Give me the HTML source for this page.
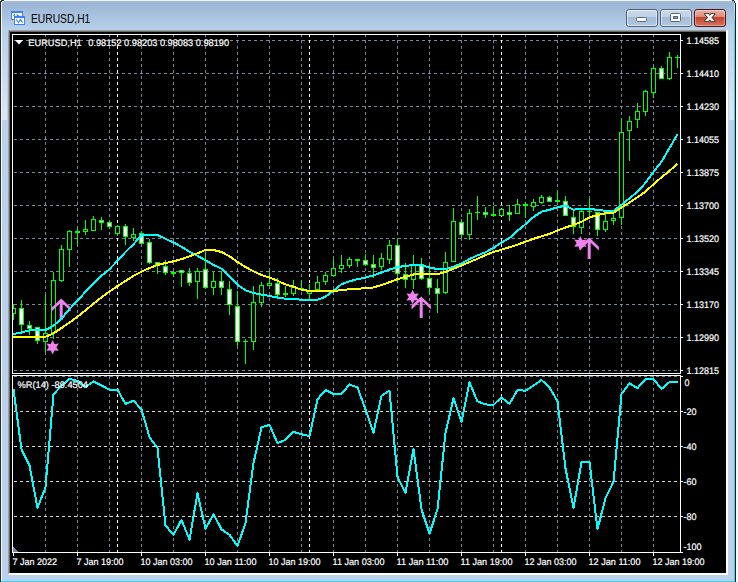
<!DOCTYPE html>
<html><head><meta charset="utf-8"><title>EURUSD,H1</title>
<style>
html,body{margin:0;padding:0;background:#fff;}
body{width:738px;height:582px;overflow:hidden;position:relative;font-family:"Liberation Sans",sans-serif;}
#win{position:absolute;left:0;top:0;width:736px;height:583px;background:#b9d1ea;}
#tb{position:absolute;left:0;top:0;width:736px;height:31px;background:linear-gradient(#a3bddb 0px,#9bb6d5 4px,#b9d1ea 30px);}
.edge{position:absolute;}
#ttl{position:absolute;left:30.8px;top:11px;font-size:12px;line-height:16px;color:#000;white-space:nowrap;transform-origin:0 0;transform:scaleX(0.855);}
.btn{position:absolute;top:9px;width:29px;height:16px;border:1px solid #56657c;border-radius:3px;background:linear-gradient(#c9d9ec 0,#bdd0e6 48%,#a4bcd9 52%,#b4c9e2 100%);box-shadow:inset 0 0 0 1px rgba(255,255,255,.55);}
#bc{border-color:#4a1a1a;background:linear-gradient(#e9a99b 0,#dc8673 48%,#c6452a 52%,#d0694f 100%);box-shadow:inset 0 0 0 1px rgba(255,255,255,.35);}
</style></head><body>
<div id="win"></div>
<div id="tb"></div>
<div class="edge" style="left:0;top:0;width:736px;height:1px;background:#f4f8fc"></div>
<div class="edge" style="left:0;top:0;width:1px;height:582px;background:#2b2b2b"></div>
<div class="edge" style="left:1px;top:1px;width:1px;height:581px;background:#f4f8fc"></div>
<div class="edge" style="left:734px;top:1px;width:1px;height:581px;background:linear-gradient(#b4ecfa 0,#b4ecfa 8px,#4fd6f3 22px,#35d3ee 40px,#35d3ee 100%)"></div>
<div class="edge" style="left:735px;top:1px;width:1px;height:581px;background:#1d1d1d"></div>
<div class="edge" style="left:1px;top:581px;width:734px;height:1px;background:#35d3ee"></div>
<div class="edge" style="left:2px;top:31px;width:5px;height:89px;background:linear-gradient(#b9d1ea,#dbe7f5)"></div>
<div class="edge" style="left:729px;top:31px;width:5px;height:89px;background:linear-gradient(#b9d1ea,#dbe7f5)"></div>
<div class="edge" style="left:0;top:0;width:1px;height:1px;background:#fff"></div>
<div class="edge" style="left:1px;top:0;width:3px;height:1px;background:#222"></div>
<div class="edge" style="left:1px;top:1px;width:1px;height:1px;background:#444"></div>
<div class="edge" style="left:2px;top:1px;width:2px;height:1px;background:#e8eef6"></div>
<div class="edge" style="left:732px;top:0;width:2px;height:1px;background:#123"></div>
<div class="edge" style="left:734px;top:0;width:4px;height:1px;background:#fff"></div>
<div class="edge" style="left:734px;top:1px;width:1px;height:2px;background:#123"></div>
<div class="edge" style="left:735px;top:1px;width:1px;height:2px;background:#fff"></div>
<div class="edge" style="left:8px;top:30px;width:720px;height:545px;background:#fff"></div>
<div class="edge" style="left:8px;top:30px;width:719px;height:544px;background:#a0a0a0"></div>
<div class="edge" style="left:9px;top:31px;width:718px;height:543px;background:#e3e3e3"></div>
<div class="edge" style="left:9px;top:31px;width:717px;height:542px;background:#696969"></div>
<div class="edge" style="left:726px;top:30px;width:2px;height:545px;background:#fff"></div>
<div class="edge" style="left:8px;top:573px;width:720px;height:2px;background:#fff"></div>
<div class="edge" style="left:8px;top:30px;width:1px;height:544px;background:#a0a0a0"></div>
<div class="edge" style="left:9px;top:31px;width:1px;height:542px;background:#696969"></div>
<!-- icon -->
<svg class="edge" style="left:10px;top:10px" width="16" height="16" viewBox="0 0 16 16" shape-rendering="crispEdges">
<rect x="1" y="1" width="12" height="9" fill="#3f80fb"/><rect x="2" y="3" width="10" height="6" fill="#fff"/>
<rect x="4" y="6" width="11" height="9" fill="#3f80fb"/><rect x="5" y="8" width="9" height="6" fill="#fffef0"/>
<g shape-rendering="geometricPrecision" fill="none" stroke="#3f80fb" stroke-width="1.1">
<path d="M3.2 5.6L4.6 4.4L4.6 5.8M6.6 4.3L8 5.9L9.4 5.9"/>
<path d="M6.2 9.3L8.5 12.7L10.4 9.4L12.6 12.6"/>
</g>
</svg>
<div id="ttl">EURUSD,H1</div>
<svg class="edge" style="left:620px;top:4px" width="112" height="28" viewBox="620 4 112 28">
<defs>
<linearGradient id="gb" x1="0" y1="0" x2="0" y2="1"><stop offset="0" stop-color="#c9d9ec"/><stop offset="0.44" stop-color="#bfd1e7"/><stop offset="0.45" stop-color="#a2bbd8"/><stop offset="1" stop-color="#b3c9e3"/></linearGradient>
<linearGradient id="gr" x1="0" y1="0" x2="0" y2="1"><stop offset="0" stop-color="#ecb5a8"/><stop offset="0.44" stop-color="#de8a76"/><stop offset="0.45" stop-color="#c4432a"/><stop offset="1" stop-color="#d9775c"/></linearGradient>
</defs>
<rect x="626.5" y="9.5" width="31" height="17" rx="2.5" fill="url(#gb)" stroke="#55637a"/>
<rect x="627.5" y="10.5" width="29" height="15" rx="2" fill="none" stroke="#fff" stroke-opacity=".5"/>
<rect x="660.5" y="9.5" width="31" height="17" rx="2.5" fill="url(#gb)" stroke="#55637a"/>
<rect x="661.5" y="10.5" width="29" height="15" rx="2" fill="none" stroke="#fff" stroke-opacity=".5"/>
<rect x="694.5" y="9.5" width="31" height="17" rx="2.5" fill="url(#gr)" stroke="#4b1622"/>
<rect x="695.5" y="10.5" width="29" height="15" rx="2" fill="none" stroke="#fff" stroke-opacity=".35"/>
<rect x="636.5" y="17.5" width="10" height="4" rx="1" fill="#fbfbfb" stroke="#5c6677"/>
<rect x="670.5" y="13.5" width="10" height="8" rx="1" fill="#fbfbfb" stroke="#5c6677"/>
<rect x="673.5" y="16.5" width="4" height="2" fill="#7f97b8" stroke="#5c6677"/>
<path d="M705 14h3.2l6.3 7h-3.2zM711.3 14h3.2l-6.3 7h-3.2z" fill="#53434a" stroke="#53434a" stroke-width="2" stroke-linejoin="round"/>
<path d="M705 14h3.2l6.3 7h-3.2zM711.3 14h3.2l-6.3 7h-3.2z" fill="#fafafa"/>
</svg>
<svg width="738" height="582" viewBox="0 0 738 582" style="position:absolute;left:0;top:0" shape-rendering="crispEdges">
<defs><clipPath id="cm"><rect x="13" y="35" width="667" height="338"/></clipPath><clipPath id="cs"><rect x="13" y="376" width="667" height="176"/></clipPath></defs>
<rect x="10" y="32" width="716" height="541" fill="#000"/>
<path d="M14 40.5H680 M14 73.5H680 M14 106.5H680 M14 139.5H680 M14 172.5H680 M14 205.5H680 M14 238.5H680 M14 271.5H680 M14 304.5H680 M14 337.5H680 M14 370.5H680 M45.5 34V373 M77.5 34V373 M109.5 34V373 M141.5 34V373 M173.5 34V373 M205.5 34V373 M237.5 34V373 M269.5 34V373 M301.5 34V373 M333.5 34V373 M365.5 34V373 M397.5 34V373 M429.5 34V373 M461.5 34V373 M493.5 34V373 M525.5 34V373 M557.5 34V373 M589.5 34V373 M621.5 34V373 M653.5 34V373" stroke="#778899" stroke-width="1" stroke-dasharray="3 3" fill="none"/>
<path d="M117.5 34V373 M117.5 376V552 M309.5 34V373 M309.5 376V552 M501.5 34V373 M501.5 376V552" stroke="#fff" stroke-width="1" stroke-dasharray="3 3" fill="none"/>
<path d="M14 376.5H680 M45.5 376V552 M77.5 376V552 M109.5 376V552 M141.5 376V552 M173.5 376V552 M205.5 376V552 M237.5 376V552 M269.5 376V552 M301.5 376V552 M333.5 376V552 M365.5 376V552 M397.5 376V552 M429.5 376V552 M461.5 376V552 M493.5 376V552 M525.5 376V552 M557.5 376V552 M589.5 376V552 M621.5 376V552 M653.5 376V552" stroke="#778899" stroke-width="1" stroke-dasharray="3 3" fill="none"/>
<path d="M14 411.5H680 M14 446.5H680 M14 481.5H680 M14 516.5H680" stroke="#d8d8d8" stroke-width="1" stroke-dasharray="3 3" fill="none"/>
<g clip-path="url(#cm)">
<path d="M13 304h1V320h-1zM11 308h5V314h-5zM21 300h1V332h-1zM19 308h5V325h-5zM29 321h1V335h-1zM27 325h5V329h-5zM37 327h1V344h-1zM35 327h5V341h-5zM45 295h1V352h-1zM43 333h5V342h-5zM53 272h1V339h-1zM51 280h5V333h-5zM61 245h1V282h-1zM59 249h5V281h-5zM69 230h1V267h-1zM67 231h5V250h-5zM77 228h1V245h-1zM75 231h5V233h-5zM85 220h1V235h-1zM83 229h5V232h-5zM93 216h1V231h-1zM91 219h5V231h-5zM101 217h1V230h-1zM99 220h5V223h-5zM109 221h1V229h-1zM107 222h5V227h-5zM117 225h1V236h-1zM115 226h5V234h-5zM125 224h1V245h-1zM123 226h5V237h-5zM133 228h1V241h-1zM131 234h5V238h-5zM141 231h1V244h-1zM139 233h5V244h-5zM149 239h1V264h-1zM147 242h5V263h-5zM157 262h1V274h-1zM155 262h5V266h-5zM165 260h1V275h-1zM163 266h5V273h-5zM173 271h1V277h-1zM171 272h5V274h-5zM181 270h1V287h-1zM179 270h5V273h-5zM189 268h1V286h-1zM187 273h5V283h-5zM197 268h1V299h-1zM195 271h5V282h-5zM205 253h1V289h-1zM203 269h5V288h-5zM213 272h1V295h-1zM211 281h5V288h-5zM221 271h1V295h-1zM219 281h5V288h-5zM229 281h1V315h-1zM227 289h5V305h-5zM237 291h1V346h-1zM235 306h5V342h-5zM245 339h1V364h-1zM243 341h5V342h-5zM253 286h1V350h-1zM251 302h5V342h-5zM261 282h1V307h-1zM259 285h5V303h-5zM269 271h1V286h-1zM267 283h5V286h-5zM277 278h1V296h-1zM275 283h5V295h-5zM285 286h1V297h-1zM283 293h5V295h-5zM293 280h1V296h-1zM291 287h5V294h-5zM301 280h1V289h-1zM299 288h5V289h-5zM309 284h1V299h-1zM307 291h5V294h-5zM317 276h1V290h-1zM315 282h5V290h-5zM325 272h1V285h-1zM323 275h5V282h-5zM333 259h1V277h-1zM331 268h5V276h-5zM341 255h1V273h-1zM339 265h5V269h-5zM349 257h1V268h-1zM347 259h5V266h-5zM357 259h1V267h-1zM355 259h5V261h-5zM365 254h1V266h-1zM363 260h5V265h-5zM373 255h1V278h-1zM371 264h5V268h-5zM381 253h1V270h-1zM379 258h5V267h-5zM389 240h1V264h-1zM387 245h5V260h-5zM397 239h1V283h-1zM395 245h5V274h-5zM405 263h1V288h-1zM403 274h5V280h-5zM413 255h1V289h-1zM411 264h5V280h-5zM421 258h1V280h-1zM419 264h5V279h-5zM429 264h1V295h-1zM427 278h5V288h-5zM437 279h1V313h-1zM435 288h5V294h-5zM445 252h1V294h-1zM443 262h5V293h-5zM453 208h1V262h-1zM451 221h5V262h-5zM461 219h1V238h-1zM459 222h5V235h-5zM469 209h1V240h-1zM467 213h5V235h-5zM477 196h1V220h-1zM475 212h5V213h-5zM485 207h1V218h-1zM483 212h5V215h-5zM493 206h1V216h-1zM491 214h5V216h-5zM501 209h1V216h-1zM499 209h5V216h-5zM509 205h1V221h-1zM507 212h5V215h-5zM517 199h1V214h-1zM515 204h5V214h-5zM525 202h1V218h-1zM523 204h5V206h-5zM533 199h1V211h-1zM531 202h5V207h-5zM541 195h1V204h-1zM539 197h5V203h-5zM549 196h1V202h-1zM547 197h5V202h-5zM557 191h1V202h-1zM555 200h5V202h-5zM565 196h1V216h-1zM563 201h5V216h-5zM573 210h1V234h-1zM571 217h5V227h-5zM581 210h1V234h-1zM579 211h5V228h-5zM589 199h1V217h-1zM587 211h5V212h-5zM597 212h1V236h-1zM595 212h5V230h-5zM605 214h1V232h-1zM603 221h5V230h-5zM613 213h1V225h-1zM611 218h5V221h-5zM621 119h1V225h-1zM619 132h5V218h-5zM629 116h1V161h-1zM627 121h5V131h-5zM637 103h1V128h-1zM635 111h5V120h-5zM645 90h1V116h-1zM643 91h5V112h-5zM653 66h1V98h-1zM651 68h5V93h-5zM661 66h1V79h-1zM659 68h5V79h-5zM669 52h1V80h-1zM667 57h5V79h-5zM677 55h1V68h-1zM675 57h5V58h-5z" fill="#00ff00"/>
<path d="M12 309h3V313h-3zM44 334h3V341h-3zM52 281h3V332h-3zM60 250h3V280h-3zM68 232h3V249h-3zM84 230h3V231h-3zM92 220h3V230h-3zM116 227h3V233h-3zM132 235h3V237h-3zM196 272h3V281h-3zM212 282h3V287h-3zM252 303h3V341h-3zM260 286h3V302h-3zM268 284h3V285h-3zM292 288h3V293h-3zM308 292h3V293h-3zM316 283h3V289h-3zM324 276h3V281h-3zM332 269h3V275h-3zM340 266h3V268h-3zM348 260h3V265h-3zM380 259h3V266h-3zM388 246h3V259h-3zM412 265h3V279h-3zM444 263h3V292h-3zM452 222h3V261h-3zM468 214h3V234h-3zM500 210h3V215h-3zM516 205h3V213h-3zM532 203h3V206h-3zM540 198h3V202h-3zM580 212h3V227h-3zM604 222h3V229h-3zM612 219h3V220h-3zM620 133h3V217h-3zM628 122h3V130h-3zM636 112h3V119h-3zM644 92h3V111h-3zM652 69h3V92h-3zM668 58h3V78h-3z" fill="#000"/>
<path d="M20 309h3V324h-3zM28 326h3V328h-3zM36 328h3V340h-3zM100 221h3V222h-3zM108 223h3V226h-3zM124 227h3V236h-3zM140 234h3V243h-3zM148 243h3V262h-3zM156 263h3V265h-3zM164 267h3V272h-3zM180 271h3V272h-3zM188 274h3V282h-3zM204 270h3V287h-3zM220 282h3V287h-3zM228 290h3V304h-3zM236 307h3V341h-3zM276 284h3V294h-3zM364 261h3V264h-3zM372 265h3V267h-3zM396 246h3V273h-3zM404 275h3V279h-3zM420 265h3V278h-3zM428 279h3V287h-3zM436 289h3V293h-3zM460 223h3V234h-3zM484 213h3V214h-3zM508 213h3V214h-3zM548 198h3V201h-3zM564 202h3V215h-3zM572 218h3V226h-3zM596 213h3V229h-3zM660 69h3V78h-3z" fill="#fff"/>
<g shape-rendering="geometricPrecision">
<polygon points="52.6,340.0 54.5,343.9 58.8,343.6 56.4,347.2 58.8,350.8 54.5,350.5 52.6,354.4 50.7,350.5 46.4,350.8 48.8,347.2 46.4,343.6 50.7,343.9" fill="#ee82ee"/>
<polygon points="412.6,289.8 414.5,293.7 418.8,293.4 416.4,297.0 418.8,300.6 414.5,300.3 412.6,304.2 410.7,300.3 406.4,300.6 408.8,297.0 406.4,293.4 410.7,293.7" fill="#ee82ee"/>
<polygon points="580.4,236.0 582.3,239.9 586.6,239.6 584.2,243.2 586.6,246.8 582.3,246.5 580.4,250.4 578.5,246.5 574.2,246.8 576.6,243.2 574.2,239.6 578.5,239.9" fill="#ee82ee"/>
<polygon points="61.2,298.4 70.9,307.7 70.9,311.4 62.7,303.6 62.7,319.9 59.7,319.9 59.7,303.6 51.5,311.4 51.5,307.7" fill="#ee82ee"/>
<polygon points="421.2,296.4 430.9,305.7 430.9,309.4 422.7,301.6 422.7,317.9 419.7,317.9 419.7,301.6 411.5,309.4 411.5,305.7" fill="#ee82ee"/>
<polygon points="589.2,237.5 598.9,246.8 598.9,250.5 590.7,242.7 590.7,259.0 587.7,259.0 587.7,242.7 579.5,250.5 579.5,246.8" fill="#ee82ee"/>
</g>
<polyline points="12,334.0 13.5,334.0 21.5,332.5 29.5,330.4 37.5,330.2 45.5,330.1 53.5,325.8 61.5,318.7 69.5,309.0 77.5,300.8 85.5,291.7 93.5,283.7 101.5,275.8 109.5,269.2 117.5,260.8 125.5,252.0 133.5,244.2 141.5,235.3 149.5,235.0 157.5,235.0 165.5,238.8 173.5,242.5 181.5,246.7 189.5,251.7 197.5,255.8 205.5,260.3 213.5,265.0 221.5,268.7 229.5,276.7 237.5,284.6 245.5,290.3 253.5,293.0 261.5,294.6 269.5,296.0 277.5,297.5 285.5,298.8 293.5,299.3 301.5,299.6 309.5,300.1 317.5,299.8 325.5,296.7 333.5,290.8 341.5,284.2 349.5,281.3 357.5,279.2 365.5,277.6 373.5,275.3 381.5,272.5 389.5,269.5 397.5,267.2 405.5,265.8 413.5,265.2 421.5,265.2 429.5,267.5 437.5,269.1 445.5,269.2 453.5,266.7 461.5,263.7 469.5,259.0 477.5,255.4 485.5,252.2 493.5,248.0 501.5,242.5 509.5,238.0 517.5,230.8 525.5,224.2 533.5,217.0 541.5,211.7 549.5,209.8 557.5,207.3 565.5,206.0 573.5,209.7 581.5,208.7 589.5,208.7 597.5,210.0 605.5,210.8 613.5,210.8 621.5,205.0 629.5,198.3 637.5,191.7 645.5,182.9 653.5,172.0 661.5,161.7 669.5,148.0 677.5,134.2" fill="none" stroke="#00ffff" stroke-width="2" stroke-linejoin="round"/>
<polyline points="12,337.0 13.5,337.0 21.5,337.0 29.5,337.0 37.5,337.0 45.5,336.8 53.5,333.3 61.5,328.0 69.5,322.5 77.5,316.7 85.5,310.3 93.5,303.7 101.5,297.3 109.5,291.5 117.5,286.0 125.5,281.0 133.5,275.8 141.5,271.7 149.5,268.0 157.5,265.0 165.5,263.0 173.5,261.3 181.5,259.2 189.5,256.3 197.5,253.3 205.5,250.0 213.5,250.0 221.5,252.0 229.5,256.3 237.5,262.0 245.5,267.0 253.5,271.3 261.5,275.0 269.5,277.5 277.5,280.8 285.5,284.4 293.5,286.8 301.5,289.7 309.5,291.0 317.5,291.0 325.5,291.0 333.5,290.8 341.5,290.3 349.5,289.2 357.5,288.8 365.5,288.2 373.5,287.5 381.5,285.0 389.5,282.2 397.5,279.2 405.5,276.7 413.5,274.5 421.5,274.1 429.5,274.1 437.5,274.1 445.5,272.0 453.5,268.6 461.5,265.6 469.5,262.0 477.5,258.8 485.5,255.0 493.5,252.0 501.5,249.7 509.5,247.2 517.5,244.7 525.5,241.7 533.5,238.8 541.5,236.3 549.5,233.9 557.5,230.5 565.5,227.5 573.5,225.0 581.5,221.7 589.5,217.5 597.5,215.0 605.5,213.3 613.5,212.8 621.5,207.5 629.5,202.5 637.5,197.3 645.5,191.6 653.5,184.2 661.5,177.3 669.5,170.8 677.5,163.8" fill="none" stroke="#ffff00" stroke-width="2" stroke-linejoin="round"/>
</g>
<g clip-path="url(#cs)">
<polyline points="12,389.5 13.5,389.5 21.5,449.3 29.5,465.5 37.5,507.9 45.5,487.2 53.5,394.3 61.5,385.7 69.5,378.7 77.5,381.0 85.5,387.0 93.5,381.4 101.5,385.5 109.5,389.7 117.5,389.6 125.5,404.0 133.5,400.7 141.5,409.4 149.5,437.2 157.5,448.1 165.5,525.5 173.5,534.8 181.5,519.8 189.5,539.7 197.5,493.1 205.5,528.8 213.5,514.3 221.5,529.3 229.5,534.8 237.5,546.0 245.5,523.0 253.5,463.0 261.5,427.4 269.5,424.9 277.5,443.1 285.5,439.8 293.5,431.9 301.5,434.3 309.5,436.1 317.5,399.4 325.5,390.0 333.5,393.9 341.5,393.9 349.5,384.5 357.5,387.5 365.5,409.4 373.5,432.6 381.5,395.7 389.5,390.7 397.5,476.7 405.5,493.0 413.5,449.0 421.5,509.3 429.5,533.5 437.5,509.3 445.5,433.0 453.5,398.2 461.5,421.9 469.5,382.5 477.5,401.4 485.5,404.4 493.5,404.9 501.5,397.4 509.5,403.9 517.5,390.0 525.5,390.7 533.5,385.7 541.5,380.0 549.5,387.5 557.5,401.4 565.5,468.5 573.5,508.0 581.5,462.0 589.5,461.8 597.5,529.3 605.5,498.0 613.5,481.7 621.5,394.0 629.5,383.2 637.5,388.2 645.5,379.0 653.5,379.0 661.5,389.0 669.5,382.0 677.5,382.0" fill="none" stroke="#00ffff" stroke-width="2" stroke-linejoin="round"/>
</g>
<path d="M12.5 34V374M12 34.5H681M12 373.5H681M680.5 34V374 M12.5 375V553M12 375.5H681M12 552.5H683M680.5 375V553" stroke="#fff" stroke-width="1" fill="none"/>
<path d="M681 40.5h2 M681 73.5h2 M681 106.5h2 M681 139.5h2 M681 172.5h2 M681 205.5h2 M681 238.5h2 M681 271.5h2 M681 304.5h2 M681 337.5h2 M681 370.5h2 M681 376.5h2 M681 411.5h2 M681 446.5h2 M681 481.5h2 M681 516.5h2 M13.5 553v3 M77.5 553v3 M141.5 553v3 M205.5 553v3 M269.5 553v3 M333.5 553v3 M397.5 553v3 M461.5 553v3 M525.5 553v3 M589.5 553v3 M653.5 553v3" stroke="#fff" stroke-width="1" fill="none"/>
<polygon points="13,547 13,552 18,552" fill="#778899"/>
<polygon points="15,40 23,40 19,44.5" fill="#fff" shape-rendering="geometricPrecision"/>
<g font-family="Liberation Sans, sans-serif" font-size="9.5" fill="#fff" stroke="#fff" stroke-width="0.2" text-rendering="geometricPrecision" shape-rendering="geometricPrecision">
<text x="686.5" y="44" textLength="32.5" lengthAdjust="spacingAndGlyphs">1.14585</text>
<text x="686.5" y="77" textLength="32.5" lengthAdjust="spacingAndGlyphs">1.14410</text>
<text x="686.5" y="110" textLength="32.5" lengthAdjust="spacingAndGlyphs">1.14230</text>
<text x="686.5" y="143" textLength="32.5" lengthAdjust="spacingAndGlyphs">1.14055</text>
<text x="686.5" y="176" textLength="32.5" lengthAdjust="spacingAndGlyphs">1.13875</text>
<text x="686.5" y="209" textLength="32.5" lengthAdjust="spacingAndGlyphs">1.13700</text>
<text x="686.5" y="242" textLength="32.5" lengthAdjust="spacingAndGlyphs">1.13520</text>
<text x="686.5" y="275" textLength="32.5" lengthAdjust="spacingAndGlyphs">1.13345</text>
<text x="686.5" y="308" textLength="32.5" lengthAdjust="spacingAndGlyphs">1.13170</text>
<text x="686.5" y="341" textLength="32.5" lengthAdjust="spacingAndGlyphs">1.12990</text>
<text x="686.5" y="374" textLength="32.5" lengthAdjust="spacingAndGlyphs">1.12815</text>
<text x="684.5" y="386.0" textLength="5" lengthAdjust="spacingAndGlyphs">0</text>
<text x="683.5" y="415.0" textLength="13" lengthAdjust="spacingAndGlyphs">-20</text>
<text x="683.5" y="450.0" textLength="13" lengthAdjust="spacingAndGlyphs">-40</text>
<text x="683.5" y="485.0" textLength="13" lengthAdjust="spacingAndGlyphs">-60</text>
<text x="683.5" y="520.0" textLength="13" lengthAdjust="spacingAndGlyphs">-80</text>
<text x="683.5" y="549.5" textLength="18" lengthAdjust="spacingAndGlyphs">-100</text>
<text x="12.5" y="565" textLength="44.5" lengthAdjust="spacingAndGlyphs">7 Jan 2022</text>
<text x="76.5" y="565" textLength="47" lengthAdjust="spacingAndGlyphs">7 Jan 19:00</text>
<text x="140.5" y="565" textLength="52" lengthAdjust="spacingAndGlyphs">10 Jan 03:00</text>
<text x="204.5" y="565" textLength="52" lengthAdjust="spacingAndGlyphs">10 Jan 11:00</text>
<text x="268.5" y="565" textLength="52" lengthAdjust="spacingAndGlyphs">10 Jan 19:00</text>
<text x="332.5" y="565" textLength="52" lengthAdjust="spacingAndGlyphs">11 Jan 03:00</text>
<text x="396.5" y="565" textLength="52" lengthAdjust="spacingAndGlyphs">11 Jan 11:00</text>
<text x="460.5" y="565" textLength="52" lengthAdjust="spacingAndGlyphs">11 Jan 19:00</text>
<text x="524.5" y="565" textLength="52" lengthAdjust="spacingAndGlyphs">12 Jan 03:00</text>
<text x="588.5" y="565" textLength="52" lengthAdjust="spacingAndGlyphs">12 Jan 11:00</text>
<text x="652.5" y="565" textLength="52" lengthAdjust="spacingAndGlyphs">12 Jan 19:00</text>
<text x="28.3" y="46" textLength="53.4" lengthAdjust="spacingAndGlyphs">EURUSD,H1</text>
<text x="88.3" y="46" textLength="140.7" lengthAdjust="spacingAndGlyphs">0.98152 0.98203 0.98083 0.98190</text>
<text x="17.5" y="388" textLength="70.5" lengthAdjust="spacingAndGlyphs">%R(14) -89.4504</text>
</g>
</svg>
</body></html>
